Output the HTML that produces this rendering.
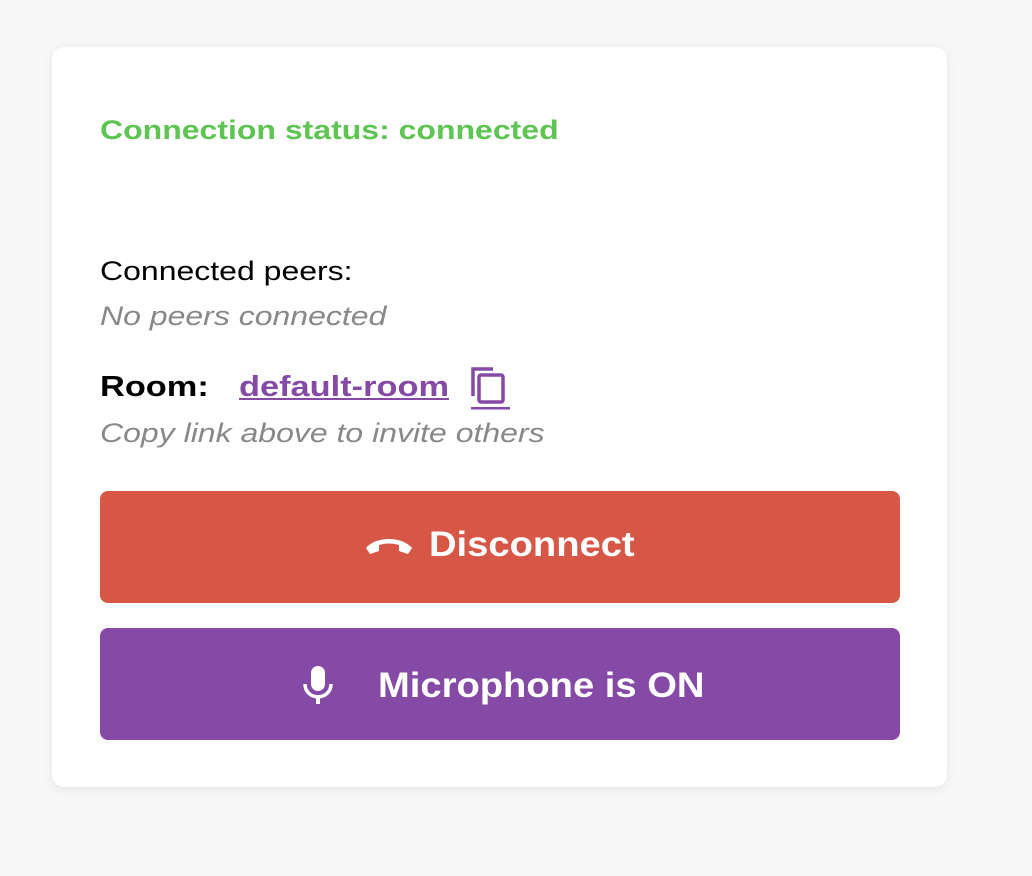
<!DOCTYPE html>
<html><head><style>
body{margin:0;background:#f7f7f7;width:1032px;height:876px;font-family:"Liberation Sans",sans-serif;position:relative;overflow:hidden}
.card{position:absolute;left:52px;top:47px;width:895px;height:740px;background:#fff;border-radius:12px;box-shadow:0 2px 10px rgba(0,0,0,0.08)}
.t{position:absolute;white-space:nowrap}
.s{transform:scaleX(1.185);transform-origin:0 0}
.b{transform:scaleX(1.09);transform-origin:0 0}
.btn{position:absolute;left:100px;width:800px;height:112px;border-radius:8px;color:#fff;font-weight:bold;font-size:35px}
</style></head><body>
<div class="card"></div>
<div class="t s" style="left:100px;top:115px;color:#5ec452;font-weight:bold;font-size:27px">Connection status: connected</div>
<div class="t s" style="left:100px;top:256px;font-size:27px;color:#000">Connected peers:</div>
<div class="t s" style="left:100px;top:301px;font-size:27px;color:#888;font-style:italic">No peers connected</div>
<div class="t s" style="left:100px;top:371px;font-size:29px;color:#000;font-weight:bold">Room:</div>
<div class="t s" style="left:239px;top:371px;font-size:29px;color:#8549a6;font-weight:bold;text-decoration:underline">default-room</div>
<svg class="t" style="left:468px;top:364px" width="46" height="48" viewBox="0 0 46 48"><path d="M5 32V5h20" fill="none" stroke="#8549a6" stroke-width="3.5"/><rect x="11" y="11" width="24" height="27" rx="2" fill="none" stroke="#8549a6" stroke-width="3.5"/><rect x="3" y="43" width="39" height="2.5" fill="#8549a6"/></svg>
<div class="t s" style="left:100px;top:418px;font-size:27px;color:#888;font-style:italic">Copy link above to invite others</div>
<div class="btn" style="top:491px;background:#d65745">
<svg class="t" style="left:264px;top:44px" width="50" height="22" viewBox="0 0 50 22"><path d="M2 13C12 1 38 1 48 13L44 19 35 16 35 10C28 8 22 8 15 10L15 16 6 19Z" fill="#fff"/></svg>
<div class="t b" style="left:329px;top:34px">Disconnect</div></div>
<div class="btn" style="top:628px;background:#8549a6">
<svg class="t" style="left:200px;top:36px" width="36" height="42" viewBox="0 0 36 42"><rect x="11" y="2" width="14" height="25" rx="7" fill="#fff"/><path d="M5 20C5 37 31 37 31 20" fill="none" stroke="#fff" stroke-width="3.5"/><rect x="16" y="31" width="4" height="9" fill="#fff"/></svg>
<div class="t b" style="left:278px;top:38px">Microphone is ON</div></div>
</body></html>
